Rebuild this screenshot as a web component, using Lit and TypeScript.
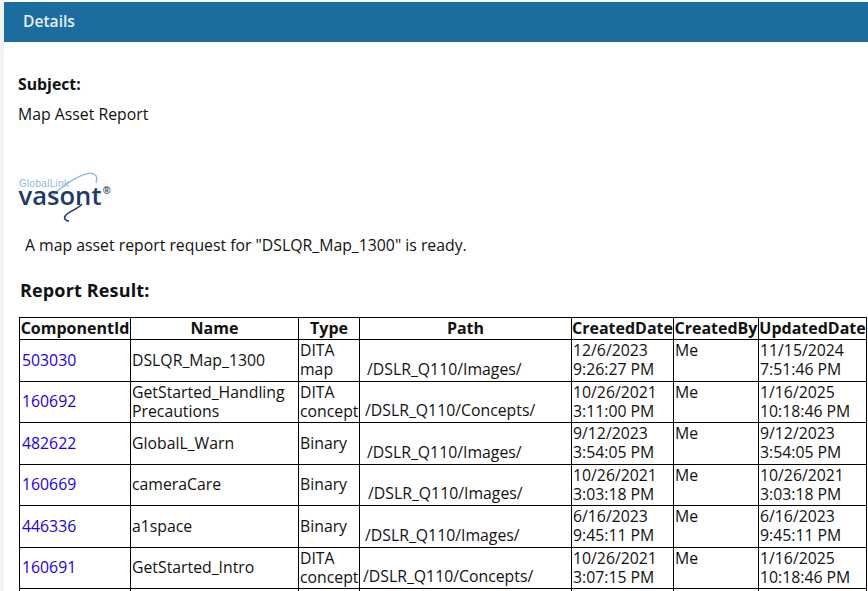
import { LitElement, html, css } from "lit";
import { customElement } from "lit/decorators.js";

const rows = [
  { id: "503030", name: "DSLQR_Map_1300", type: "DITA map", path: "/DSLR_Q110/Images/", pad: 7, c: ["12/6/2023", "9:26:27 PM"], u: ["11/15/2024", "7:51:46 PM"] },
  { id: "160692", name: "GetStarted_Handling Precautions", type: "DITA concept", path: "/DSLR_Q110/Concepts/", pad: 5, c: ["10/26/2021", "3:11:00 PM"], u: ["1/16/2025", "10:18:46 PM"] },
  { id: "482622", name: "GlobalL_Warn", type: "Binary", path: "/DSLR_Q110/Images/", pad: 7, c: ["9/12/2023", "3:54:05 PM"], u: ["9/12/2023", "3:54:05 PM"] },
  { id: "160669", name: "cameraCare", type: "Binary", path: "/DSLR_Q110/Images/", pad: 8, c: ["10/26/2021", "3:03:18 PM"], u: ["10/26/2021", "3:03:18 PM"] },
  { id: "446336", name: "a1space", type: "Binary", path: "/DSLR_Q110/Images/", pad: 5, c: ["6/16/2023", "9:45:11 PM"], u: ["6/16/2023", "9:45:11 PM"] },
  { id: "160691", name: "GetStarted_Intro", type: "DITA concept", path: "/DSLR_Q110/Concepts/", pad: 3, c: ["10/26/2021", "3:07:15 PM"], u: ["1/16/2025", "10:18:46 PM"] },
];
const widths = [111, 168, 61, 212, 102, 85, 108];

@customElement("app-root")
export class AppRoot extends LitElement {
  static styles = css`
    :host {
      display: block;
      height: 591px;
      overflow: hidden;
      background: #fff;
      font-family: "Open Sans", sans-serif;
      font-size: 15.8px;
      line-height: 19px;
      color: #111;
    }
    .page {
      border-left: 4px solid #f3f3f3;
      min-height: 591px;
      box-sizing: border-box;
      padding-top: 2px;
      width: 900px;
    }
    .bar {
      background: #1b6c9f;
      color: #e8f0f6;
      font-weight: 600;
      height: 40px;
      line-height: 39px;
      padding-left: 19px;
      font-size: 15.6px;
    }
    .subject { margin: 31px 0 0 14px; font-weight: 700; line-height: 22px; }
    .desc { margin: 8px 0 0 14px; line-height: 22px; }
    .logo { display: block; margin: 45px 0 0 14px; }
    .msg { margin: 12px 0 0 21px; line-height: 22px; }
    h2 { margin: 22px 0 0 16px; font-size: 18px; font-weight: 700; line-height: 24px; letter-spacing: 0.15px; }
    table {
      margin: 15px 0 0 15px;
      border-collapse: collapse;
      table-layout: fixed;
      width: 847px;
      color: #111;
    }
    th, td {
      box-sizing: border-box;
      border: 1px solid #000;
      padding: 0 1px;
    }
    th { height: 22px; font-size: 16px; font-weight: 700; text-align: center; padding: 0 0 1px; white-space: nowrap; }
    td { height: 41.5px; line-height: 19px; vertical-align: middle; }
    td.id { padding-left: 2px; }
    a { color: #2000e0; text-decoration: none; }
    td.path { vertical-align: bottom; padding: 0 0 2px 0; white-space: nowrap; }
    td.top { vertical-align: top; padding-top: 1px; }
    .line { display: block; white-space: nowrap; }
  `;

  render() {
    return html`
      <div class="page">
        <div class="bar">Details</div>
        <div class="subject">Subject:</div>
        <div class="desc">Map Asset Report</div>
        <svg class="logo" width="94" height="52" viewBox="0 0 94 52" role="img" aria-label="GlobalLink Vasont">
          <path d="M34 26 C42 19 55 7 70 3.5 C78 2 80 7 78 13" fill="none" stroke="#8fbfe0" stroke-width="1.5" />
          <text x="1" y="17" font-family="Liberation Sans, sans-serif" font-size="10" textLength="50" fill="#8db9dc">GlobalLink</text>
          <text x="0.5" y="35" font-family="Open Sans, sans-serif" font-size="26" font-weight="600" textLength="83" lengthAdjust="spacingAndGlyphs" fill="#1e3a66">vasont</text>
          <path d="M64 34 C60 39 52 41 48 45 C45 48 47 51 51 51" fill="none" stroke="#1e3a66" stroke-width="1.5" />
          <text x="85" y="24" font-family="Liberation Sans, sans-serif" font-size="10" font-weight="700" fill="#1e3a66">®</text>
        </svg>
        <div class="msg">A map asset report request for "DSLQR_Map_1300" is ready.</div>
        <h2>Report Result:</h2>
        <table>
          <colgroup>${widths.map((w) => html`<col style="width:${w}px" />`)}</colgroup>
          <thead>
            <tr>
              <th>ComponentId</th><th>Name</th><th>Type</th><th>Path</th>
              <th>CreatedDate</th><th>CreatedBy</th><th>UpdatedDate</th>
            </tr>
          </thead>
          <tbody>
            ${rows.map(
              (r) => html`
                <tr>
                  <td class="id"><a href="#">${r.id}</a></td>
                  <td>${r.name}</td>
                  <td>${r.type}</td>
                  <td class="path" style="padding-left:${r.pad}px">${r.path}</td>
                  <td><span class="line">${r.c[0]}</span><span class="line">${r.c[1]}</span></td>
                  <td class="top">Me</td>
                  <td><span class="line">${r.u[0]}</span><span class="line">${r.u[1]}</span></td>
                </tr>
              `
            )}
            <tr><td></td><td></td><td></td><td></td><td></td><td></td><td></td></tr>
          </tbody>
        </table>
      </div>
    `;
  }
}
